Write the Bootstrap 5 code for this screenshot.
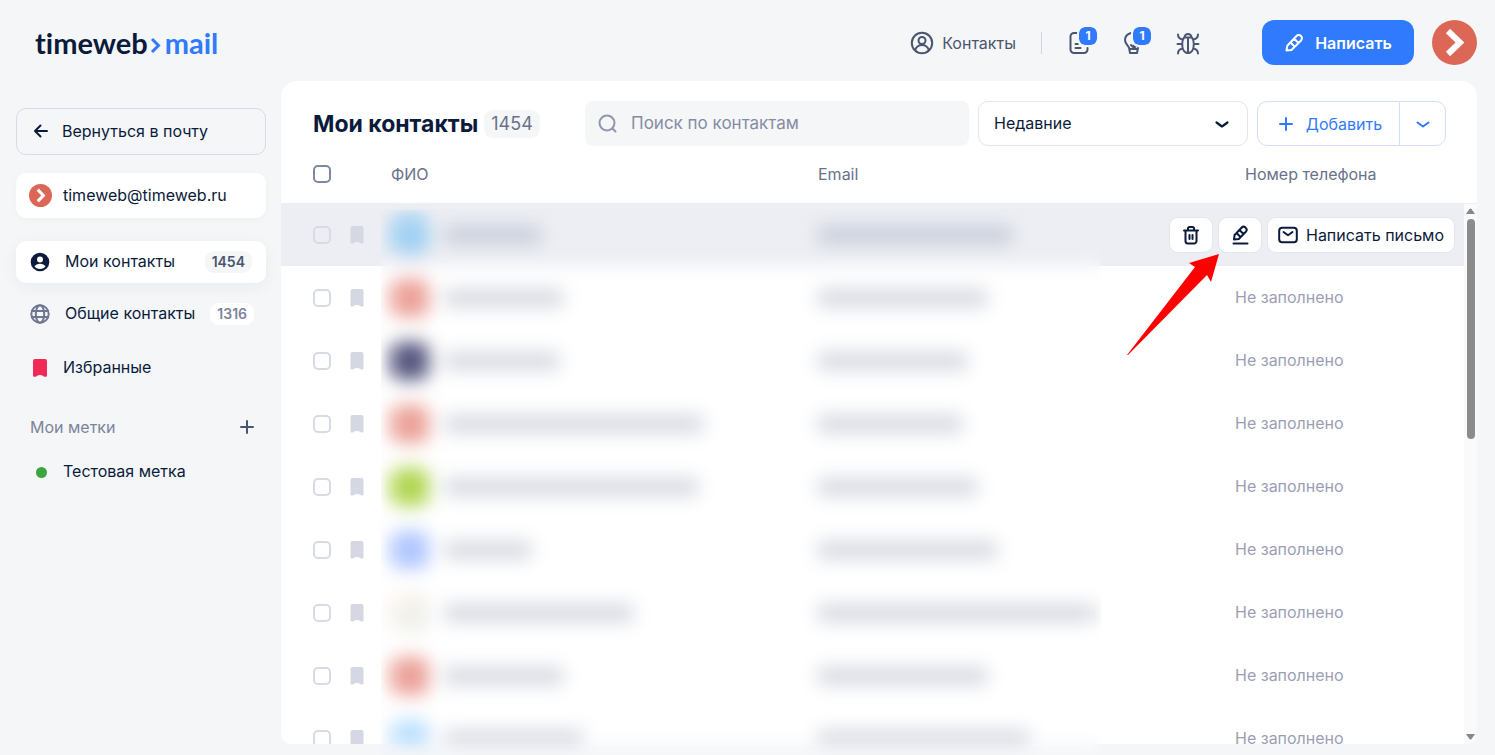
<!DOCTYPE html>
<html lang="ru">
<head>
<meta charset="utf-8">
<meta name="viewport" content="width=device-width, initial-scale=1">
<title>Мои контакты</title>
<link href="https://cdn.jsdelivr.net/npm/bootstrap@5.3.0/dist/css/bootstrap.min.css" rel="stylesheet">
<style>
:root{--ink:#0b1b3b;--slate:#4a5670;--mute:#7d849b;--pale:#9c9eb5;--line:#d8dbe5;--blue:#307afd}
body{font-family:Inter,"Liberation Sans",sans-serif;font-size:16px;line-height:24px;color:var(--ink);background:#f4f6f8;overflow:hidden}
svg{display:block;flex:none}
.ic{fill:none;stroke:currentColor;stroke-width:2;stroke-linecap:round;stroke-linejoin:round}
a{text-decoration:none;color:inherit}
.topbar{height:81px;flex:none;padding:0 18px 0 35px}
.brand{font:700 29px/32px Lato,sans-serif;font-variant-ligatures:none}
.brand .mailword{color:var(--blue)}
.toplink{color:var(--slate)}
.vline{width:1px;height:22px;background:#cfd3de;margin:0 26px 0 25px}
.toptools{margin-right:62px}
.iconbtn{border:0;background:none;padding:0;color:var(--slate);width:24px;height:24px;position:relative}
.toptools .iconbtn + .iconbtn{margin-left:30px}
.notif{position:absolute;left:11px;top:-4px;width:18px;height:18px;border-radius:6px;background:var(--blue);color:#fff;font-size:12px;font-weight:700;line-height:18px;outline:2px solid #f4f6f8}
.compose{width:152px;height:45px;border-radius:12px;background:var(--blue);border:0;color:#fff;font-weight:600;gap:11px;margin-right:18px}
.sidebar{width:281px;flex:none;padding:27px 15px 0 16px}
.back{height:47px;border:1px solid var(--line);border-radius:10px;padding:0 15px 2px;gap:12px;background:none;text-align:left;color:var(--ink)}
.acct{height:45px;margin-top:18px;padding:0 13px;gap:11px;border-radius:10px;background:#fff;box-shadow:0 2px 8px rgba(20,30,60,.03)}
.acct span,.menu a span{padding-bottom:2px}
.menu{margin-top:23px}
.menu a{height:42px;padding:0 14px;border-radius:10px;gap:15px;white-space:nowrap}
.menu a.on{background:#fff;box-shadow:0 4px 16px rgba(20,30,60,.05);margin-bottom:10px}
.menu a.tight{gap:13px}
.menu a .count{font-size:14px;line-height:22px;font-weight:600;border-radius:9px;padding:0 7px;background:#fff;color:var(--mute)}
.menu a.on .count{background:#f4f6f8;color:var(--slate)}
.tags{margin-top:30px;padding:0 11px 0 14px;color:var(--mute)}
.panel{background:#fff;border-radius:16px 16px 10px 10px;overflow:hidden;position:relative}
.tools{padding:20px 31px 0 32px;gap:9px}
.tools h1{font-size:23px;line-height:32px;font-weight:700;margin:0}
.head-count{background:#f4f6f8;border-radius:9px;color:#6a728a;font-size:18px;line-height:28px;padding:0 7px}
.titlebox{width:263px;gap:6px;flex:none}
.search input{height:45px;border:0;border-radius:8px;background:#f4f6f8;padding:0 16px 1px 46px;font-size:17px}
.search input::placeholder{color:#868ca3;opacity:1}
.search svg{position:absolute;left:12px;top:12px;color:#9097ac}
.sort{width:270px;height:45px;flex:none;border:1px solid #e3e5ea;border-radius:10px;padding:0 15px 1px;color:var(--ink);background-position:right 17px center;background-size:16px 16px;background-image:url("data:image/svg+xml,%3Csvg xmlns='http://www.w3.org/2000/svg' viewBox='0 0 16 16' fill='none' stroke='%230b1b3b' stroke-width='2.2' stroke-linecap='round' stroke-linejoin='round'%3E%3Cpath d='M2.500 6.500L8 10.500l5.500-4'/%3E%3C/svg%3E")}
.addgroup{width:189px;height:45px;flex:none}
.addgroup .btn{border:1px solid #cfdffc;color:var(--blue);border-radius:10px;background:#fff;padding:0}
.addgroup .addmain{gap:12px;padding-left:3px}
.addgroup .addmore{width:47px}
table.contacts{table-layout:fixed;width:100%;margin:0}
.contacts th,.contacts td{padding:0 0 0 10px;vertical-align:middle}
.contacts th{height:57px;font-weight:400;color:#6a728a;padding-bottom:2px}
.contacts td{height:63px}
.contacts th:first-child,.contacts td:first-child{padding-left:32px}
.contacts td:last-child{padding-left:0;color:var(--pale)}
.contacts td .blank{display:block;padding-bottom:2px}
.contacts tr.hovered{background:#edeef3}
input.tick{appearance:none;display:block;flex:none;width:18px;height:18px;margin:0;border:2px solid var(--line);border-radius:5px}
th input.tick{border-color:#7e879f}
.flag{color:#d5d8e2}
.ava{width:38px;height:38px;border-radius:10px;flex:none;filter:blur(5px)}
.hid{height:18px;background:#d6d9e1;display:block;filter:blur(5px)}
.hovered .hid{background:#c8cdd9}
.rowacts{gap:5px;padding-right:22px}
.rowacts .btn{height:36px;width:44px;flex:none;padding:0;border:1px solid #e4e6ec;border-radius:9px;background:#fff;color:var(--ink)}
.rowacts .btn.wide{width:188px;gap:8px}
.frost{position:absolute;left:100px;right:394px;top:129px;bottom:0;-webkit-backdrop-filter:blur(8px);backdrop-filter:blur(8px);pointer-events:none}
.sbar{position:absolute;right:0;top:123px;bottom:0;width:13px;background:#fafafb;padding:3px 0}
.sbar i{display:block;width:8px;height:220px;border-radius:4px;background:#8b8b8b;margin-top:3px}
.pointer{position:absolute;right:274px;top:172px}
</style>
</head>
<body>
<div class="d-flex flex-column vh-100">
<header class="topbar d-flex align-items-center">
  <a href="#" class="brand d-flex align-items-center pt-1"><span>timeweb</span><svg width="17" height="24" viewBox="0 0 17 24" fill="none" stroke="#307afd" stroke-width="3"><path d="M4 8l6.500 6.500L4 21"/></svg><span class="mailword">mail</span></a>
  <nav class="toptools d-flex align-items-center ms-auto pt-1">
    <a href="#" class="toplink d-flex align-items-center gap-2"><svg class="ic" width="24" height="24" viewBox="0 0 24 24"><circle cx="12" cy="12" r="10.200"/><circle cx="12" cy="9.500" r="3.500"/><path d="M5 19c1.500-3.500 4-5 7-5s5.500 1.500 7 5"/></svg>Контакты</a>
    <span class="vline"></span>
    <button class="iconbtn" aria-label="Новости"><svg class="ic" width="24" height="24" viewBox="0 0 24 24"><path d="M9 2H6a3.500 3.500 0 0 0-3.500 3.500v13A3.500 3.500 0 0 0 6 22h10a3.500 3.500 0 0 0 3.500-3.500V17M7.500 13H10M7.500 17h5"/></svg><span class="notif">1</span></button>
    <button class="iconbtn" aria-label="Идеи"><svg class="ic" width="24" height="24" viewBox="0 0 24 24"><path d="M9 2C5.500 3 3 5.800 3 9c0 3.500 2.500 5 4 7.500l1 5.500h7l1-5M8 18h7M12 13v4M9 14l3 3 2-2"/></svg><span class="notif">1</span></button>
    <button class="iconbtn" aria-label="Сообщить об ошибке"><svg class="ic" width="24" height="24" viewBox="0 0 24 24"><path d="M8.500 6.500a3.500 3.500 0 0 1 7 0M8 6.500h8c1.300 2 1.800 4 1.800 6.500 0 5-2 9-5.800 9s-5.800-4-5.800-9c0-2.500.5-4.500 1.800-6.500zM12 8v13M1.500 13h4.500M18 13h4.500M2 3.500C2 6.500 4 8 6.800 8.500M22 3.500c0 3-2 4.500-4.800 5M2 22.500c0-3 2-4.500 4.800-5M22 22.500c0-3-2-4.500-4.800-5"/></svg></button>
  </nav>
  <button class="compose btn d-flex align-items-center justify-content-center mt-1"><svg class="ic" width="20" height="20" viewBox="0 0 20 20"><path d="M2.500 17.500l.8-4.800L12.500 3a3 3 0 0 1 4.500 4.500L7.500 17zM10 5.500l4.500 4.500M6.500 9.500l4 4"/></svg>Написать</button>
  <a href="#" class="mt-1" aria-label="Профиль"><svg width="45" height="45" viewBox="0 0 45 45"><circle cx="22.500" cy="22.500" r="22.500" fill="#dc6756"/><path d="M16 11l12 11.500L16 34" fill="none" stroke="#fff" stroke-width="6"/></svg></a>
</header>
<div class="d-flex flex-grow-1" style="min-height:0">
  <aside class="sidebar">
    <button class="back w-100 d-flex align-items-center"><svg class="ic" width="18" height="18" viewBox="0 0 18 18"><path d="M15 9H3M8.500 3.500L3 9l5.500 5.500"/></svg>Вернуться в почту</button>
    <div class="acct d-flex align-items-center"><svg width="23" height="23" viewBox="0 0 45 45"><circle cx="22.500" cy="22.500" r="22.500" fill="#dc6756"/><path d="M17 11l11 11.500L17 34" fill="none" stroke="#fff" stroke-width="6"/></svg><span>timeweb@timeweb.ru</span></div>
    <nav class="menu">
      <a href="#" class="on d-flex align-items-center"><svg width="20" height="20" viewBox="0 0 20 20"><circle cx="10" cy="10" r="9.300" fill="#0b1b3b"/><circle cx="10" cy="7.600" r="3" fill="#fff"/><path d="M4.500 14.500c1-2 3-2.800 5.500-2.800s4.500.8 5.500 2.800c-1 1.600-3 2.500-5.500 2.500s-4.500-.9-5.500-2.500z" fill="#fff"/></svg><span>Мои контакты</span><span class="count ms-auto">1454</span></a>
      <a href="#" class="d-flex align-items-center"><svg class="ic" width="20" height="20" viewBox="0 0 20 20" style="color:#6e7690"><circle cx="10" cy="10" r="8.700"/><ellipse cx="10" cy="10" rx="4.200" ry="8.700"/><path d="M2 7h16M2 13h16"/></svg><span>Общие контакты</span><span class="count ms-auto">1316</span></a>
      <a href="#" class="tight d-flex align-items-center mt-2 pt-2"><svg width="20" height="20" viewBox="0 0 20 20"><path d="M5 1h10a2 2 0 0 1 2 2v14.800a1 1 0 0 1-1 1q-1.500.2-2.500-.6-1.500-1.200-3.500-1.200t-3.500 1.200q-1 .8-2.500.6a1 1 0 0 1-1-1V3a2 2 0 0 1 2-2z" fill="#f12a55"/></svg><span>Избранные</span></a>
    </nav>
    <div class="tags d-flex align-items-center"><span>Мои метки</span><button class="iconbtn ms-auto w-auto" aria-label="Добавить метку"><svg class="ic" width="16" height="24" viewBox="0 0 16 24"><path d="M8 6v12M2 12h12"/></svg></button></div>
    <nav class="menu mt-2 pt-1"><a href="#" class="tight d-flex align-items-center"><svg width="20" height="20" viewBox="0 0 20 20"><circle cx="11.500" cy="10.500" r="5.500" fill="#3da53d"/></svg><span>Тестовая метка</span></a></nav>
  </aside>
  <main class="flex-grow-1 d-flex flex-column" style="min-width:0;padding:0 18px 11px 0;position:relative">
    <section class="panel flex-grow-1" style="min-height:0">
      <div class="tools d-flex align-items-center">
        <div class="titlebox d-flex align-items-center"><h1>Мои контакты</h1><span class="head-count">1454</span></div>
        <div class="search position-relative flex-grow-1"><svg class="ic" width="22" height="22" viewBox="0 0 22 22"><circle cx="10" cy="10" r="7.500"/><path d="M15.500 15.500l3 3"/></svg><input class="form-control" type="search" placeholder="Поиск по контактам" aria-label="Поиск по контактам"></div>
        <select class="form-select sort" aria-label="Сортировка"><option>Недавние</option><option>По имени</option></select>
        <div class="btn-group addgroup">
          <button class="addmain btn d-flex align-items-center justify-content-center flex-grow-1"><svg class="ic" width="16" height="16" viewBox="0 0 16 16"><path d="M8 2v12M2 8h12"/></svg>Добавить</button>
          <button class="addmore btn flex-grow-0 d-flex align-items-center justify-content-center" aria-label="Ещё"><svg class="ic" width="16" height="16" viewBox="0 0 16 16"><path d="M2.500 6.500L8 10.500l5.500-4"/></svg></button>
        </div>
      </div>
      <table class="contacts">
        <colgroup><col style="width:100px"><col><col><col style="width:242px"></colgroup>
        <thead><tr><th><input class="tick" type="checkbox" aria-label="Выбрать все"></th><th>ФИО</th><th>Email</th><th>Номер телефона</th></tr></thead>
        <tbody id="rows"></tbody>
      </table>
      <div class="sbar d-flex flex-column align-items-center" aria-hidden="true"><svg width="9" height="9" viewBox="0 0 9 9"><path d="M0 7l3.500-5q1-1 2 0L9 7z" fill="#888"/></svg><i></i><svg class="mt-auto" width="9" height="8" viewBox="0 0 9 8"><path d="M0 1h9L5.500 6q-1 1-2 0z" fill="#888"/></svg></div>
    </section>
    <div class="frost"></div>
    <svg class="pointer" width="96" height="104" viewBox="0 0 96 104"><path d="M2 102L70 14l-6-4L94 1 86 29l-4-7L3 102z" fill="#f00"/></svg>
  </main>
</div>
</div>
<script src="https://cdn.jsdelivr.net/npm/bootstrap@5.3.0/dist/js/bootstrap.bundle.min.js"></script>
<script>
// avatar colour, name width, e-mail width
const contacts = [
  ['#9fd0f2', 96, 194], ['#eba098', 118, 169], ['#54557d', 114, 149], ['#eba098', 258, 144],
  ['#b0d550', 253, 159], ['#b0c6ff', 86, 179], ['linear-gradient(135deg,#fdf0e8,#e8f0ec)', 188, 276],
  ['#eba098', 118, 169], ['#bbdfff', 138, 211]
];
const actions = `<div class="rowacts d-flex justify-content-end">
<button class="btn d-flex align-items-center justify-content-center" aria-label="Удалить"><svg class="ic" width="20" height="20" viewBox="0 0 20 20"><path d="M3 5.500h14M7 5V3.500A1.500 1.500 0 0 1 8.500 2h3A1.500 1.500 0 0 1 13 3.500V5M4.500 6v10a2.500 2.500 0 0 0 2.500 2.500h6a2.500 2.500 0 0 0 2.500-2.500V6M8.500 10v4M11.500 10v4"/></svg></button>
<button class="btn d-flex align-items-center justify-content-center" aria-label="Изменить"><svg class="ic" width="20" height="20" viewBox="0 0 20 20"><path d="M4 14.500l.6-4.500L11.500 2.800a2.800 2.800 0 0 1 4.300 4L8.800 14zM9.500 5l4 4M6.500 8l4 4M3.500 18.500h14"/></svg></button>
<button class="btn wide d-flex align-items-center justify-content-center"><svg class="ic" width="20" height="20" viewBox="0 0 20 20"><rect x="1.200" y="2.800" width="17.600" height="14.400" rx="3"/><path d="M5.500 7l4.500 3.200L14.500 7"/></svg>Написать письмо</button></div>`;
document.getElementById('rows').innerHTML = contacts.map(([color, name, mail], i) => `
<tr class="${i ? '' : 'hovered'}"><td><div class="d-flex align-items-center" style="gap:18px"><input class="tick" type="checkbox" aria-label="Выбрать контакт"><svg class="flag" width="16" height="20" viewBox="0 0 16 20"><path d="M3.500 1h9a2 2 0 0 1 2 2v14.500a1 1 0 0 1-1 1q-1.200.2-2.200-.6-1.300-1-3.300-1t-3.300 1q-1 .8-2.200.6a1 1 0 0 1-1-1V3a2 2 0 0 1 2-2z" fill="currentColor"/></svg></div></td>
<td><div class="d-flex align-items-center gap-3"><span class="ava" style="background:${color}"></span><span class="hid" style="width:${name}px"></span></div></td>
<td><span class="hid" style="width:${mail}px"></span></td>
<td>${i ? '<span class="blank">Не заполнено</span>' : actions}</td></tr>`).join('');
</script>
</body>
</html>
